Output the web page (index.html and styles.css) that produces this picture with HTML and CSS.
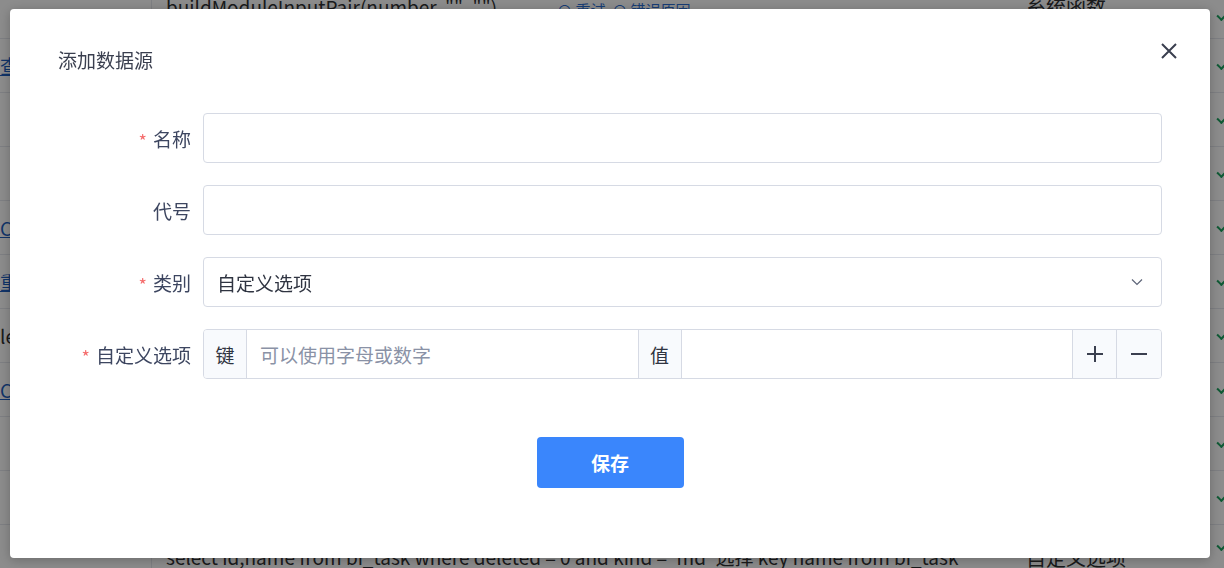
FILE: index.html
```html
<!DOCTYPE html>
<html lang="zh-CN">
<head>
  <meta charset="UTF-8">
  <meta name="viewport" content="width=device-width, initial-scale=1.0">
  <title>数据源</title>
  <link rel="stylesheet" href="styles.css">
</head>
<body>

  <!-- list behind the dialog -->
  <div class="page">
    <div class="row first">
      <div class="cell c1"></div>
      <div class="cell c2"><span class="code">buildModuleInputPair(number, "", "")</span><span class="ops">⊙ 重试 &nbsp;⊙ 错误原因</span></div>
      <div class="cell c3">系统函数</div>
      <div class="cell c4"><span class="tick"></span></div>
    </div>
    <div class="row">
      <div class="cell c1"><a href="#">查询</a></div>
      <div class="cell c2"></div>
      <div class="cell c3"></div>
      <div class="cell c4"><span class="tick"></span></div>
    </div>
    <div class="row">
      <div class="cell c1"></div>
      <div class="cell c2"></div>
      <div class="cell c3"></div>
      <div class="cell c4"><span class="tick"></span></div>
    </div>
    <div class="row">
      <div class="cell c1"></div>
      <div class="cell c2"></div>
      <div class="cell c3"></div>
      <div class="cell c4"><span class="tick"></span></div>
    </div>
    <div class="row">
      <div class="cell c1"><a href="#">C</a></div>
      <div class="cell c2"></div>
      <div class="cell c3"></div>
      <div class="cell c4"><span class="tick"></span></div>
    </div>
    <div class="row">
      <div class="cell c1"><a href="#">重</a></div>
      <div class="cell c2"></div>
      <div class="cell c3"></div>
      <div class="cell c4"><span class="tick"></span></div>
    </div>
    <div class="row">
      <div class="cell c1">le</div>
      <div class="cell c2"></div>
      <div class="cell c3"></div>
      <div class="cell c4"><span class="tick"></span></div>
    </div>
    <div class="row">
      <div class="cell c1"><a href="#">C</a></div>
      <div class="cell c2"></div>
      <div class="cell c3"></div>
      <div class="cell c4"><span class="tick"></span></div>
    </div>
    <div class="row">
      <div class="cell c1"></div>
      <div class="cell c2"></div>
      <div class="cell c3"></div>
      <div class="cell c4"><span class="tick"></span></div>
    </div>
    <div class="row">
      <div class="cell c1"></div>
      <div class="cell c2"></div>
      <div class="cell c3"></div>
      <div class="cell c4"><span class="tick"></span></div>
    </div>
    <div class="row last">
      <div class="cell c1"></div>
      <div class="cell c2">select id,name from bi_task where deleted = 0 and kind = 'md' 选择 key name from bi_task</div>
      <div class="cell c3">自定义选项</div>
      <div class="cell c4"><span class="tick"></span></div>
    </div>
  </div>

  <!-- add data source dialog -->
  <div class="mask">
    <div class="dialog">
      <div class="dialog-header">
        <span class="dialog-title">添加数据源</span>
        <button class="dialog-close" type="button">
          <svg width="18" height="18" viewBox="0 0 18 18"><path d="M2 2L16 16M16 2L2 16" stroke="#3a3f4f" stroke-width="2" fill="none"/></svg>
        </button>
      </div>

      <form class="form">
        <label class="form-label required">名称</label>
        <input class="form-input" type="text">

        <label class="form-label">代号</label>
        <input class="form-input" type="text">

        <label class="form-label required">类别</label>
        <div class="form-select">
          <span>自定义选项</span>
          <svg width="12" height="8" viewBox="0 0 12 8"><path d="M1 1.5L6 6.5L11 1.5" stroke="#5d6478" stroke-width="1.2" fill="none"/></svg>
        </div>

        <label class="form-label required">自定义选项</label>
        <div class="pair">
          <span class="pair-addon">键</span>
          <input class="pair-input" type="text" placeholder="可以使用字母或数字">
          <span class="pair-addon">值</span>
          <input class="pair-input" type="text">
          <button class="pair-btn" type="button">
            <svg width="18" height="18" viewBox="0 0 18 18"><path d="M9 1V17M1 9H17" stroke="#3a3f4f" stroke-width="2" fill="none"/></svg>
          </button>
          <button class="pair-btn" type="button">
            <svg width="18" height="18" viewBox="0 0 18 18"><path d="M1 9H17" stroke="#3a3f4f" stroke-width="2" fill="none"/></svg>
          </button>
        </div>

        <div class="form-actions">
          <button class="btn-primary" type="button">保存</button>
        </div>
      </form>
    </div>
  </div>

</body>
</html>
```

FILE: styles.css
```css
body {
  margin: 0;
  font-family: "Noto Sans CJK SC", "Noto Sans", sans-serif;
  color: #303133;
  background: #fff;
  overflow: hidden;
  height: 568px;
}

/* table behind the mask */
.page {
  margin-top: -15px;
}

.row {
  display: flex;
  height: 53px;
  border-bottom: 1px solid #e6e8ee;
  font-size: 19px;
}

.cell {
  display: flex;
  align-items: center;
  padding: 0 14px;
  white-space: nowrap;
  overflow: hidden;
}

.c1 {
  width: 152px;
  box-sizing: border-box;
  border-right: 1px solid #e6e8ee;
  padding-left: 0;
}

.c1 a {
  color: #1f5fbf;
}

.c2 {
  width: 860px;
  box-sizing: border-box;
  gap: 60px;
}

.row.first .cell {
  align-items: flex-end;
  padding-bottom: 18px;
}

.row.last .cell {
  align-items: flex-start;
  padding-top: 18px;
}

.ops {
  color: #2b6fd6;
  font-size: 15px;
}

.c3 {
  width: 200px;
  box-sizing: border-box;
  font-size: 20px;
}

.c4 {
  flex: 1;
  padding: 0 0 0 6px;
}

.tick {
  width: 9px;
  height: 5px;
  border-left: 2px solid #1aa25e;
  border-bottom: 2px solid #1aa25e;
  transform: rotate(-45deg);
}

/* dark mask */
.mask {
  position: fixed;
  inset: 0;
  background: rgba(0, 0, 0, 0.45);
  padding: 9px 0 0 10px;
}

.dialog {
  width: 1200px;
  height: 549px;
  background: #fff;
  border-radius: 4px;
  box-shadow: 0 2px 12px rgba(0, 0, 0, 0.25);
  box-sizing: border-box;
}

.dialog-header {
  display: flex;
  justify-content: space-between;
  align-items: flex-start;
  padding: 37px 32px 0 48px;
  height: 28px;
}

.dialog-title {
  font-size: 19px;
  line-height: 28px;
  color: #3a3f4f;
}

.dialog-close {
  border: none;
  background: none;
  padding: 0;
  margin-top: -4px;
  width: 18px;
  height: 18px;
  display: flex;
}

/* form */
.form {
  display: grid;
  grid-template-columns: 193px 959px;
  row-gap: 22px;
  margin-top: 39px;
}

.form-label {
  display: flex;
  align-items: center;
  justify-content: flex-end;
  padding-right: 12px;
  height: 50px;
  font-size: 19px;
  color: #3d4660;
}

.form-label.required::before {
  content: "*";
  color: #f56c6c;
  margin-right: 6px;
  font-size: 18px;
  margin-top: 4px;
}

.form-input,
.form-select,
.pair {
  height: 50px;
  box-sizing: border-box;
  border: 1px solid #d6dae4;
  border-radius: 4px;
  background: #fff;
}

.form-input {
  font: inherit;
  font-size: 19px;
  padding: 0 14px;
  outline: none;
}

.form-select {
  display: flex;
  align-items: center;
  justify-content: space-between;
  padding: 0 18px 0 13px;
  font-size: 19px;
  color: #2f3441;
}

.pair {
  display: flex;
  overflow: hidden;
}

.pair-addon {
  width: 42px;
  display: flex;
  align-items: center;
  justify-content: center;
  background: #f8fafd;
  font-size: 19px;
  color: #2f3441;
  border-right: 1px solid #d6dae4;
}

.pair-input + .pair-addon {
  border-left: 1px solid #d6dae4;
}

.pair-input {
  flex: 1;
  min-width: 0;
  border: none;
  outline: none;
  font: inherit;
  font-size: 19px;
  padding: 0 13px;
}

.pair-input::placeholder {
  color: #8a92a6;
}

.pair-btn {
  width: 44px;
  border: none;
  border-left: 1px solid #d6dae4;
  background: #f8fafd;
  display: flex;
  align-items: center;
  justify-content: center;
  padding: 0;
}

.pair-btn:last-child {
  width: 45px;
}

.form-actions {
  grid-column: 1 / 3;
  display: flex;
  justify-content: center;
  padding-left: 48px;
  margin-top: 36px;
}

.btn-primary {
  width: 147px;
  height: 51px;
  border: none;
  border-radius: 4px;
  background: #3a86fc;
  color: #fff;
  font: inherit;
  font-size: 19px;
  font-weight: bold;
  cursor: pointer;
}
```
